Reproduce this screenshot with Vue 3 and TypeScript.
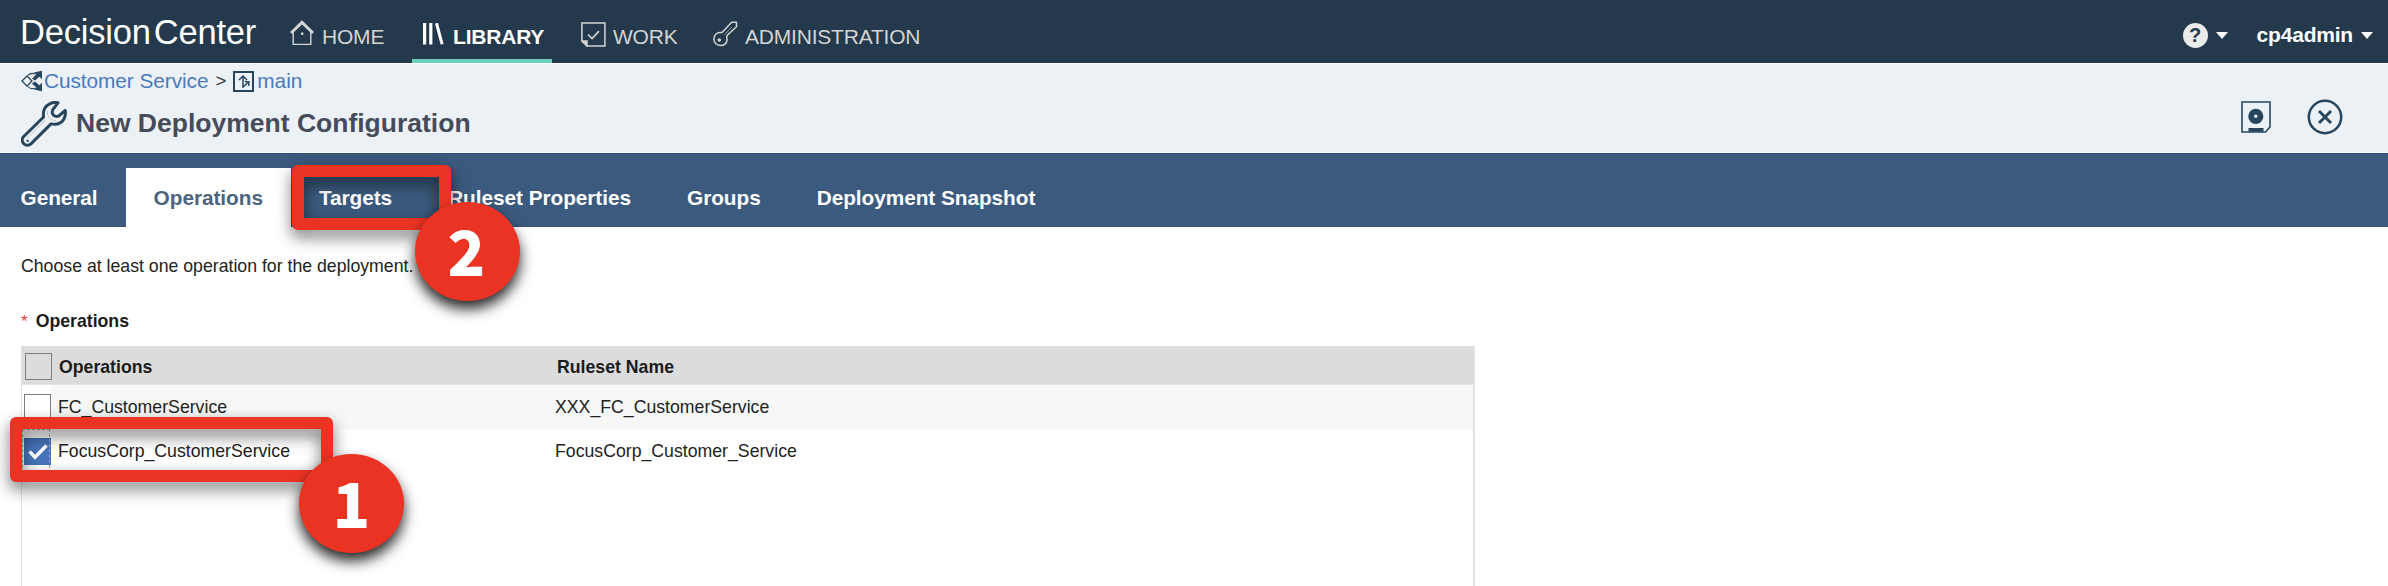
<script setup lang="ts">
interface Tab { label: string; active?: boolean }
interface Operation { name: string; ruleset: string; checked: boolean }

const tabs: Tab[] = [
  { label: 'General' },
  { label: 'Operations', active: true },
  { label: 'Targets' },
  { label: 'Ruleset Properties' },
  { label: 'Groups' },
  { label: 'Deployment Snapshot' },
]

const operations: Operation[] = [
  { name: 'FC_CustomerService', ruleset: 'XXX_FC_CustomerService', checked: false },
  { name: 'FocusCorp_CustomerService', ruleset: 'FocusCorp_Customer_Service', checked: true },
]
</script>

<template>
  <div class="page">
    <header class="topbar">
      <div class="brand"><span>Decision</span><span>Center</span></div>
      <nav class="nav">
        <a class="nav-item home">
          <svg width="24" height="26" viewBox="0 0 24 26" fill="none" stroke="#d3d4d4">
            <path d="M1 13 12 2.3 23 13" stroke-width="3" />
            <path d="M3.2 12v12.4h17.6V12" stroke-width="1.4" />
            <rect x="11" y="12.5" width="2.4" height="2.4" fill="#d3d4d4" stroke="none" />
          </svg>
          <span>HOME</span>
        </a>
        <a class="nav-item library active">
          <svg width="22" height="22" viewBox="0 0 22 22" fill="#fff">
            <path d="M0 0h3.2v21.500H0zM6.200 0h3.200v21.500H6.200zM12 .5l3-.6L20.600 21l-3 .6z" />
          </svg>
          <span>LIBRARY</span>
        </a>
        <a class="nav-item work">
          <svg width="25" height="25" viewBox="0 0 25 25" fill="none" stroke="#d3d4d4" stroke-width="1.500">
            <path d="M.9.9h23v23H6.200L.9 19z" />
            <path d="M1 19h5v5z" fill="#d3d4d4" />
            <path d="m7 12.500 4 4 7-7.300" stroke-width="1.700" />
          </svg>
          <span>WORK</span>
        </a>
        <a class="nav-item admin">
          <svg width="25" height="26" viewBox="0 0 25 26" fill="none" stroke="#d3d4d4" stroke-width="1.500" stroke-linejoin="round">
            <path d="M9.500 11 18.700 1.200h4.800v4.600L14 14.500c-.6 1.300.4 3.200-.2 5.800-.9 2.800-3.600 4.400-6.400 4.200C3.600 24.200.9 21.500.9 17.800c.1-3.600 2.900-6.300 6.100-6.200 1.200 0 1.900.1 2.500-.6z" />
            <circle cx="6.200" cy="19" r="1.800" fill="#d3d4d4" stroke="none" />
            <path d="m11.500 13.500 7.500-7.500" stroke-width="1" opacity=".6" />
          </svg>
          <span>ADMINISTRATION</span>
        </a>
      </nav>
      <div class="account">
        <span class="help">?</span>
        <i class="caret"></i>
        <span class="user">cp4admin</span>
        <i class="caret"></i>
      </div>
    </header>

    <section class="subheader">
      <div class="heading">
        <div class="crumbs">
          <svg width="22" height="22" viewBox="0 0 22 22" fill="none" stroke="#27465d">
            <path d="m1 11 5-5 5 5-5 5z" stroke-width="1.300" />
            <path d="M7 5.500C9 2.800 12 3 14.500 4M7 16.500C9 19.200 12 19 14.500 18" stroke-width="1.200" />
            <path d="M21 .8v8.400l-2.600-2.400-4.400 3.800-3-1.800 4.400-4.600-2.600-1.800zM21 21.200v-8.400l-2.600 2.400-4.400-3.800-3 1.800 4.400 4.600-2.600 1.800z" fill="#27465d" stroke="none" />
          </svg>
          <a class="service">Customer Service</a>
          <span class="sep">&gt;</span>
          <svg width="21" height="21" viewBox="0 0 21 21" fill="none" stroke="#27465d">
            <rect x="1" y="1" width="19" height="19" stroke-width="2" />
            <path d="M10 17V5.500M6 9l4-4 4 4M10 16l5-4.500M12 10.500l4 .5-.5 4" stroke-width="1.500" />
          </svg>
          <a class="branch">main</a>
        </div>
        <div class="title-row">
          <svg width="46" height="46" viewBox="0 0 46 46" fill="none" stroke="#27465d" stroke-width="3" stroke-linejoin="round">
            <path d="M37 1.800C31.500.600 26 3 23.600 7.600c-1.600 3-1.500 5.500-1 8.400L2.700 35.500c-2 2.200-1.900 5.200.1 7.200s5.200 2 7.400-.1L30 22.900c5 1.100 9.800-.300 12.400-4 1.900-2.700 2.400-6.200 1.800-9.400l-6.300 5.400c-2.400 1.200-5.300.200-6.300-2-.800-1.900-.3-4 1.200-5.600z" />
            <path d="m25 18.500-19 19M26.500 10c-.6 5.500 2.800 9.600 8.500 9.300" stroke-width="1" opacity=".25" />
            <path d="M5.500 39.500h1.500v1.500" stroke-width="1.400" />
          </svg>
          <h1>New Deployment Configuration</h1>
        </div>
      </div>
      <div class="actions">
        <svg width="30" height="32" viewBox="0 0 30 32" fill="none" stroke="#27465d">
          <path d="M1 1h28v25l-4.500 5H1z" stroke-width="1.600" />
          <circle cx="14.800" cy="15.300" r="4.700" stroke-width="5.800" />
          <path d="M7.500 28.800h15" stroke-width="3.600" />
        </svg>
        <svg width="36" height="36" viewBox="0 0 36 36" fill="none" stroke="#27465d">
          <circle cx="18" cy="18" r="16.200" stroke-width="2.500" />
          <path d="m12 12 12 12M24 12 12 24" stroke-width="2.900" />
        </svg>
      </div>
    </section>

    <nav class="tabs">
      <a v-for="tab in tabs" :key="tab.label" class="tab" :class="{ active: tab.active }">{{ tab.label }}</a>
    </nav>

    <main class="content">
      <p class="hint">Choose at least one operation for the deployment.</p>
      <div class="field-label"><span class="required">*</span><b>Operations</b></div>
      <div class="table">
        <div class="row head">
          <span class="check"><i class="box"></i></span>
          <span class="name">Operations</span>
          <span class="ruleset">Ruleset Name</span>
        </div>
        <div v-for="op in operations" :key="op.name" class="row" :class="{ selected: op.checked }">
          <span class="check">
            <i class="box" :class="{ checked: op.checked }">
              <svg v-if="op.checked" width="27" height="27" viewBox="0 0 27 27" fill="none" stroke="#fff" stroke-width="3.400">
                <path d="m5.500 13.500 5.500 5.700L22.500 7.500" />
              </svg>
            </i>
          </span>
          <span class="name">{{ op.name }}</span>
          <span class="ruleset">{{ op.ruleset }}</span>
        </div>
      </div>
    </main>

    <div class="frame frame-operation"></div>
    <div class="frame frame-targets"></div>
    <div class="step step-one">1</div>
    <div class="step step-two">2</div>
  </div>
</template>

<style>
html, body { margin: 0; overflow: hidden; }
</style>

<style scoped>
* { box-sizing: border-box; }
.page {
  position: relative;
  width: 2388px;
  height: 586px;
  overflow: hidden;
  background: #fff;
  color: #222;
  font-family: "Liberation Sans", Arial, sans-serif;
}
svg { display: block; flex: none; }

.topbar { display: flex; height: 63px; background: #24394b; color: #fff; }
.brand {
  display: flex;
  gap: 3px;
  width: 272px;
  padding-left: 20px;
  font-size: 34.500px;
  letter-spacing: -0.2px;
  line-height: 64px;
}
.nav { display: flex; font-size: 21px; letter-spacing: -0.2px; color: #d3d4d4; }
.nav-item { display: flex; align-items: flex-start; height: 63px; white-space: nowrap; }
.nav-item span { line-height: 73px; }
.home { padding-left: 18px; width: 140px; gap: 8px; }
.home svg { margin-top: 20px; }
.library {
  width: 140px;
  padding-left: 11px;
  gap: 8px;
  color: #fff;
  font-weight: bold;
  letter-spacing: -0.2px;
  box-shadow: inset 0 -4px #6bd1bd;
}
.library svg { margin-top: 23px; }
.work { padding-left: 29px; width: 161px; gap: 7px; }
.work svg { margin-top: 22px; }
.admin { padding-left: 0; gap: 7px; }
.admin svg { margin-top: 21px; }
.account { display: flex; align-items: center; height: 71px; margin-left: auto; padding-right: 15px; }
.help {
  width: 25px;
  height: 25px;
  margin-right: 8px;
  border-radius: 50%;
  background: #ebebeb;
  color: #24394b;
  font-size: 20px;
  font-weight: bold;
  line-height: 25px;
  text-align: center;
}
.caret { border: 6px solid transparent; border-top: 7px solid #fff; border-bottom: 0; }
.user { margin: 0 8px 0 29px; font-size: 21px; line-height: 24px; padding-bottom: 1px; font-weight: bold; letter-spacing: -0.2px; }

.subheader {
  display: flex;
  justify-content: space-between;
  height: 90px;
  background: #ecf1f6;
  border-top: 1px solid #fafcfd;
  border-bottom: 1px solid #f8fafb;
}
.heading { padding-left: 21px; }
.crumbs { display: flex; align-items: center; height: 34px; font-size: 20.800px; }
.crumbs a { color: #4b79bd; white-space: nowrap; }
.service { margin-left: 1px; letter-spacing: -0.05px; }
.sep { margin: 0 7px 0 7px; color: #333; font-size: 18.500px; }
.branch { margin-left: 3px; }
.title-row { display: flex; align-items: center; height: 48px; margin-top: 1px; gap: 9px; }
.title-row svg { margin-top: 1px; }
h1 { margin: 0; color: #464b5a; font-size: 26.500px; line-height: 48px; white-space: nowrap; }
.actions { display: flex; align-items: center; gap: 36px; padding: 18px 45px 0 0; height: 88px; }

.tabs {
  display: flex;
  align-items: flex-end;
  height: 74px;
  background: #3b5a7d;
  box-shadow: inset 0 1px #33516f, inset 0 -1px #33516f;
  color: #fff;
  font-size: 20.800px;
  font-weight: bold;
  letter-spacing: -0.05px;
}
.tab { height: 59px; padding: 0 28px; line-height: 59px; white-space: nowrap; }
.tab:first-child { padding-left: 20.500px; }
.tab.active { background: #fff; color: #4c657d; }

.content { padding-left: 21px; font-size: 17.700px; }
.hint { margin: 0; padding-top: 19px; line-height: 41px; }
.field-label { display: flex; gap: 8px; height: 59px; line-height: 69px; color: #1b1b1b; }
.required { color: #e2423b; font-size: 17px; }
.table {
  width: 1454px;
  height: 250px;
  border: 2px solid #e2e2e2;
  border-width: 1px 2px 0 1px;
}
.row { display: flex; height: 44px; line-height: 44px; white-space: nowrap; background: linear-gradient(90deg, #fff 29px, #f7f7f7 29px); }
.row.selected { background: #fff; }
.row.head { height: 38px; line-height: 40px; background: #dcdcdc; border-bottom: 1px solid #e5e5e5; color: #1b1b1b; font-weight: bold; }
.check { flex: none; width: 28px; padding: 9px 0 0 2px; }
.head .check { padding: 6px 0 0 3px; width: 30px; }
.name { flex: none; width: 505px; padding-left: 8px; }
.head .name { padding-left: 7px; width: 505px; }
.box { display: block; width: 27px; height: 27px; border: 1.500px solid #77827f; }
.box.checked { border: 0; background: #4673b8; }
.selected .check { outline: 1px dashed #a4a8a8; outline-offset: -1px; }

.frame {
  position: absolute;
  height: 65px;
  border: 12px solid #eb3323;
  border-radius: 6px;
  filter: drop-shadow(0 7px 8px rgba(0, 0, 0, .55));
}
.frame-operation { left: 10px; top: 417px; width: 323px; }
.frame-targets { left: 292px; top: 165px; width: 159px; }
.step {
  position: absolute;
  width: 105px;
  height: 99px;
  border-radius: 50%;
  background: #eb3323;
  box-shadow: 0 8px 14px rgba(0, 0, 0, .85);
  color: #fff;
  font: 900 62px/94px "Noto Sans CJK SC", sans-serif;
  text-align: center;
}
.step-one { left: 299px; top: 454px; }
.step-two { left: 415px; top: 202px; padding-right: 2px; }
</style>
